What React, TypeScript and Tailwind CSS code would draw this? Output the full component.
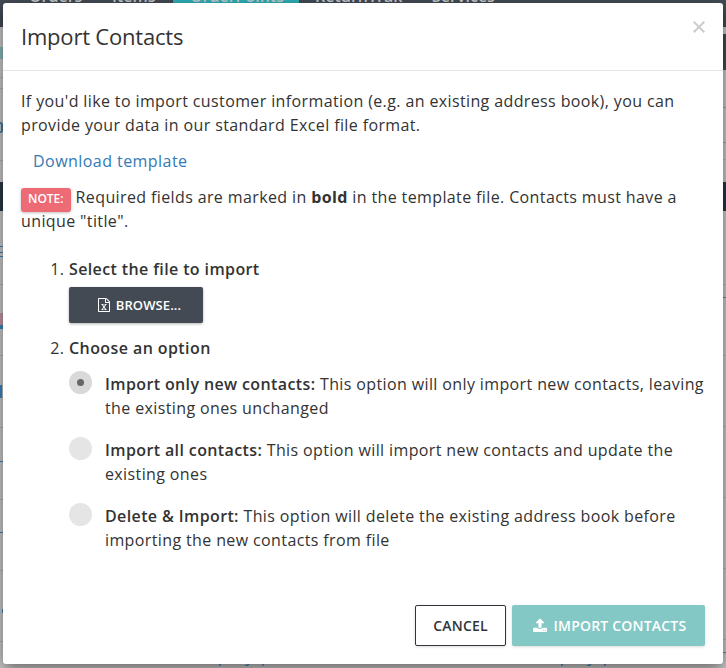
import React from "react";

function ExcelIcon() {
  return (
    <svg viewBox="0 0 1536 1792" className="h-[14px] w-3 fill-current">
      <path d="M1468 380q28 28 48 76t20 88v1152q0 40-28 68t-68 28h-1344q-40 0-68-28t-28-68v-1600q0-40 28-68t68-28h896q40 0 88 20t76 48zm-444-244v376h376q-10-29-22-41l-313-313q-12-12-41-22zm384 1528v-1024h-416q-40 0-68-28t-28-68v-416h-768v1536h1280zm-979-234v106h281v-106h-75l103-161q5-7 10-16.5t7.5-13.5 3.5-4h2q1 4 5 10 2 4 4.5 7.5t6 8 6.5 8.5l107 161h-76v106h291v-106h-68l-192-273 195-282h67v-107h-279v107h74l-103 159q-4 7-10 16.5t-9 13.5l-2 3h-2q-1-4-5-10-6-11-17-23l-106-159h76v-107h-290v107h68l189 272-194 283h-68z" />
    </svg>
  );
}

function UploadIcon() {
  return (
    <svg viewBox="0 0 1664 1792" className="h-[15px] w-[14px] fill-current">
      <path d="M1280 1472q0-26-19-45t-45-19-45 19-19 45 19 45 45 19 45-19 19-45zm256 0q0-26-19-45t-45-19-45 19-19 45 19 45 45 19 45-19 19-45zm128-224v320q0 40-28 68t-68 28h-1472q-40 0-68-28t-28-68v-320q0-40 28-68t68-28h427q21 56 70.5 92t110.5 36h256q61 0 110.5-36t70.5-92h427q40 0 68 28t28 68zm-325-648q-17 40-59 40h-256v448q0 26-19 45t-45 19h-256q-26 0-45-19t-19-45v-448h-256q-42 0-59-40-17-39 14-69l448-448q18-19 45-19t45 19l448 448q31 30 14 69z" />
    </svg>
  );
}

const options = [
  { title: "Import only new contacts:", text: "This option will only import new contacts, leaving the existing ones unchanged", checked: true },
  { title: "Import all contacts:", text: "This option will import new contacts and update the existing ones", checked: false },
  { title: "Delete & Import:", text: "This option will delete the existing address book before importing the new contacts from file", checked: false },
];

// The dimmed page that shows around the edges of the dialog.
function Backdrop() {
  return (
    <div className="absolute inset-0 overflow-hidden bg-[#cbcbcb]">
      <div className="flex h-[27px] justify-start bg-[#434b55] text-[16px] leading-[20px] font-semibold text-[#c9cbcd]">
        <span className="-mt-[14px] ml-[29px] w-[83px]">Orders</span>
        <span className="-mt-[14px] w-[61px]">Items</span>
        <span className="-mt-[14px] h-[40px] w-[126px] bg-[#2fb0b8] pl-[17px]">OrderPoints</span>
        <span className="-mt-[14px] ml-[16px] w-[117px]">ReturnTrak</span>
        <span className="-mt-[14px]">Services</span>
      </div>
      <div className="flex h-[155px] justify-between">
        <div className="w-[3px] pt-[20px]">
          <div className="h-[12px] bg-[#8ababa]" />
          <div className="mt-[18px] h-px bg-[#b4b4b4]" />
          <div className="mt-[10px] h-px bg-[#b4b4b4]" />
          <div className="mt-[33px] h-[11px] w-[3px] rounded-r-full border-2 border-l-0 border-[#3f7da6]" />
          <div className="mt-[27px] h-px bg-[#b4b4b4]" />
        </div>
        <div className="w-[3px] pt-[7px]">
          <div className="h-[36px] bg-[#434b55]" />
          <div className="mt-[37px] h-px bg-[#a2a2a2]" />
          <div className="mt-[34px] h-px bg-[#a2a2a2]" />
          <div className="mt-[16px] h-px bg-[#b8b8b8]" />
        </div>
      </div>
      <div className="h-[29px] bg-[#293746]" />
      <div className="flex h-[457px] justify-between">
        <div className="w-[3px] pt-[35px] text-[#3a87c4]">
          <div className="h-px bg-current" />
          <div className="mt-[5px] h-px bg-current" />
          <div className="mt-[3px] h-px bg-current" />
          <div className="mt-[27px] h-px bg-[#b4b4b4]" />
          <div className="mt-[28px] h-[12px] bg-[#c597a3]" />
          <div className="h-[4px] bg-current" />
          <div className="mt-[26px] h-px bg-[#b4b4b4]" />
          <div className="mt-[29px] h-[13px] w-[2px] bg-current" />
          <div className="mt-[29px] h-px bg-[#b4b4b4]" />
          <div className="mt-[33px] h-px bg-current" />
          <div className="mt-[37px] h-px bg-[#b4b4b4]" />
          <div className="mt-[32px] h-px bg-current" />
          <div className="mt-[37px] h-px bg-[#b4b4b4]" />
          <div className="mt-[38px] ml-[2px] h-[4px] w-px bg-current" />
          <div className="mt-[28px] h-px bg-[#b4b4b4]" />
        </div>
        <div className="w-[3px] pt-[73px]">
          <div className="h-px bg-[#b4b4b4]" />
          <div className="mt-[12px] h-px bg-[#4c8ebc]" />
          <div className="mt-[57px] h-px bg-[#b4b4b4]" />
          <div className="mt-[70px] h-px bg-[#b4b4b4]" />
          <div className="mt-[70px] h-px bg-[#b4b4b4]" />
          <div className="mt-[70px] h-px bg-[#b4b4b4]" />
          <div className="mt-[70px] h-px bg-[#b4b4b4]" />
          <div className="mt-[12px] h-px bg-[#4c8ebc]" />
        </div>
      </div>
      <div className="absolute top-[646px] left-[187px] flex text-[16px] leading-[20px] text-[#3a7fb5] italic">
        <span className="w-[342px]">Company, p</span>
        <span>Company, p</span>
      </div>
    </div>
  );
}

export default function App() {
  return (
    <div className="relative h-[668px] w-[726px] overflow-hidden font-['Open_Sans','Noto_Sans',sans-serif] text-[16px] leading-6 text-[#333]">
      <Backdrop />
      <div className="absolute top-[3px] left-[3px] flex h-[661px] w-[720px] flex-col rounded-[3px] bg-white tracking-[0.38px] shadow-[0_5px_15px_rgba(0,0,0,0.5)]">
        <header className="flex h-[68px] shrink-0 items-start justify-between border-b border-[#e5e5e5] pl-[18px]">
          <h1 className="mt-[17px] text-[22px] leading-[32px] tracking-[-0.2px]">Import Contacts</h1>
          <button aria-label="Close" className="mt-[18px] mr-[18px] text-[#ccc]">
            <svg viewBox="0 0 12 12" className="h-3 w-3" stroke="currentColor" strokeWidth="2">
              <path d="M.7.7 11.3 11.3M11.3.7.7 11.3" />
            </svg>
          </button>
        </header>
        <main className="flex-1 px-[18px] pt-[18px]">
          <p>
            If you'd like to import customer information (e.g. an existing address book), you can provide your data in our standard Excel file format.
          </p>
          <a className="mt-3 ml-3 block tracking-[0.45px] text-[#337ab7]">Download template</a>
          <p className="mt-3">
            <span className="mr-[5px] inline-block h-6 translate-y-[3px] rounded-[3px] bg-[#ed6b75] px-[7px] align-top text-[12px] leading-[22px] font-semibold tracking-normal text-white shadow-[0_1px_3px_rgba(0,0,0,0.25)]">
              NOTE:
            </span>
            Required fields are marked in <b className="font-bold">bold</b> in the template file. Contacts must have a unique "title".
          </p>
          <ol className="mt-6 list-decimal pl-12">
            <li>
              <span className="font-semibold">Select the file to import</span>
              <button className="mt-[6px] flex h-9 w-[134px] items-center justify-center gap-[6px] rounded-[2px] bg-[#434a54] pl-[7px] text-[13px] font-semibold tracking-[0.1px] text-white shadow-[0_1px_3px_rgba(0,0,0,0.3)]">
                <ExcelIcon />
                BROWSE...
              </button>
            </li>
            <li className="mt-[13px]">
              <span className="font-semibold tracking-[0.42px]">Choose an option</span>
              <div className="mt-3 flex flex-col gap-[18px]">
                {options.map((o) => (
                  <label key={o.title} className="flex">
                    <span
                      className={
                        o.checked
                          ? "-mt-px mr-[13px] flex h-[23px] w-[23px] shrink-0 items-center justify-center rounded-full bg-[#d9d9d9]"
                          : "-mt-px mr-[13px] h-[23px] w-[23px] shrink-0 rounded-full bg-[#e5e5e5]"
                      }
                    >
                      {o.checked && <span className="h-[7px] w-[7px] rounded-full bg-[#666]" />}
                    </span>
                    <span>
                      <span className="font-semibold">{o.title}</span> {o.text}
                    </span>
                  </label>
                ))}
              </div>
            </li>
          </ol>
        </main>
        <footer className="flex justify-end gap-[6px] pr-[18px] pb-[18px] text-[14px] font-semibold">
          <button className="h-[41px] w-[91px] rounded-[2px] border border-[#2f353b] tracking-[0.2px] text-[#2f353b] shadow-[0_1px_3px_rgba(0,0,0,0.15)]">CANCEL</button>
          <button className="flex h-[41px] w-[193px] items-center justify-center gap-[7px] rounded-[2px] bg-[#83c8c4] pl-[2px] tracking-[0.2px] text-white shadow-[0_1px_3px_rgba(0,0,0,0.15)]">
            <UploadIcon />
            IMPORT CONTACTS
          </button>
        </footer>
      </div>
    </div>
  );
}
